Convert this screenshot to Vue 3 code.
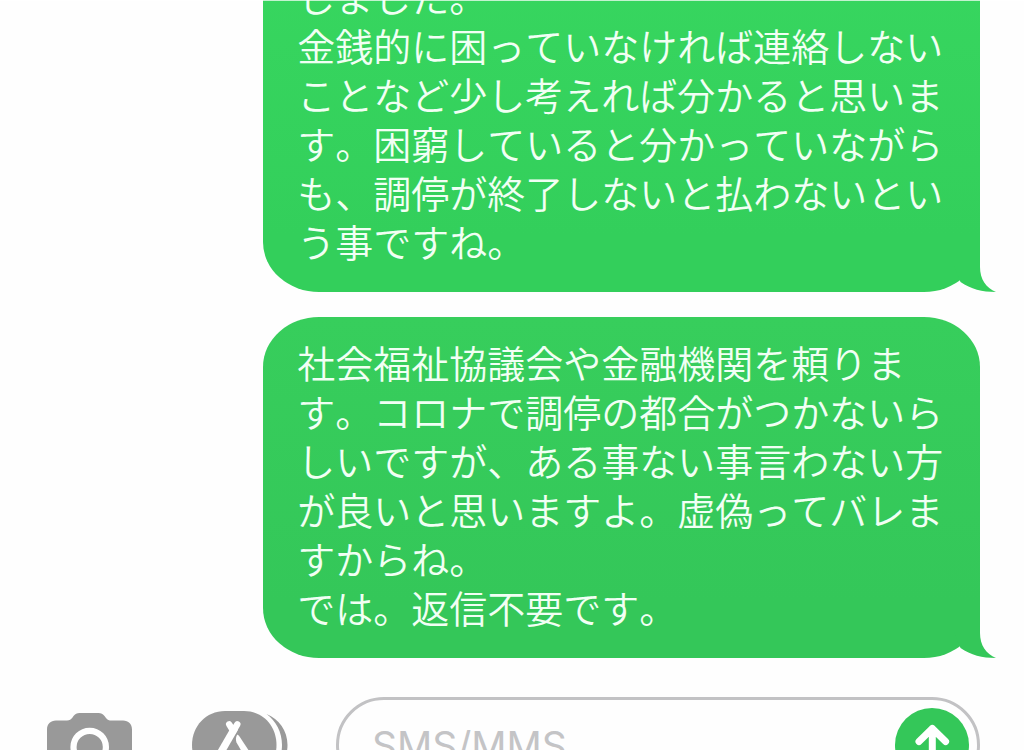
<script setup>
import { ref } from 'vue'

const draft = ref('')

const messages = [
  {
    id: 'first',
    continued: true,
    lines: [
      'しました。',
      '金銭的に困っていなければ連絡しない',
      'ことなど少し考えれば分かると思いま',
      'す。困窮していると分かっていながら',
      'も、調停が終了しないと払わないとい',
      'う事ですね。',
    ],
  },
  {
    id: 'second',
    continued: false,
    lines: [
      '社会福祉協議会や金融機関を頼りま',
      'す。コロナで調停の都合がつかないら',
      'しいですが、ある事ない事言わない方',
      'が良いと思いますよ。虚偽ってバレま',
      'すからね。',
      'では。返信不要です。',
    ],
  },
]
</script>

<template>
  <main class="page">
    <section class="thread" aria-label="メッセージ">
      <article
        v-for="message in messages"
        :key="message.id"
        class="bubble"
        :class="[message.id, { continued: message.continued }]"
      >
        <p class="text">{{ message.lines.join('\n') }}</p>
        <svg class="tail" viewBox="0 0 56 56" aria-hidden="true">
          <path
            d="M14 4H40V31C40 43 46 52 56 56C42 56 31 53 20.500 46L14 30Z"
            fill="currentColor"
          />
        </svg>
      </article>
    </section>

    <form class="composer" @submit.prevent>
      <button class="tool camera" type="button" aria-label="カメラ">
        <svg viewBox="0 0 85 64" aria-hidden="true">
          <path
            d="M9 7.500H20C22.500 7.500 24 6.500 25.500 4.500L26.500 3C28 1 30 0 32.500 0H51.500C54 0 56 1 57.500 3L59 5C60.500 7 62 7.500 64.500 7.500H76C81.500 7.500 85 11 85 16.500V55C85 60.500 81.500 64 76 64H9C3.500 64 0 60.500 0 55V16.500C0 11 3.500 7.500 9 7.500Z"
            fill="#999"
          />
          <circle cx="42.700" cy="34" r="16.200" fill="none" stroke="#fff" stroke-width="6.200" />
        </svg>
      </button>
      <button class="tool apps" type="button" aria-label="App">
        <svg viewBox="0 0 96 68" aria-hidden="true">
          <path
            d="M33 0H52C71 0 84.500 15 84.500 34S71 68 52 68H33C14 68 0 53 0 34S14 0 33 0Z"
            fill="#999"
          />
          <path
            d="M74.500 3C87 8 95.500 19.500 95.500 34S87 60 74.500 65C84 58 90 47 90 34S84 10 74.500 3Z"
            fill="#999"
          />
          <g fill="none" stroke="#fff" stroke-linecap="round">
            <path d="M37.200 13.300L41 19.500" stroke-width="6.400" />
            <path d="M45.300 13.300L41 20.500" stroke-width="6.400" />
            <path d="M42 18.500L25 48" stroke-width="7.400" />
          </g>
          <path
            d="M45 24C43.700 26 43.600 29 44.500 31.500L57 53L63 49L47.500 25.500C46.500 24 45.500 23.500 45 24Z"
            fill="#fff"
          />
        </svg>
      </button>
      <div class="field">
        <input v-model="draft" type="text" placeholder="SMS/MMS" aria-label="SMS/MMS" />
        <button class="send" type="submit" aria-label="送信">
          <svg viewBox="0 0 74 74" aria-hidden="true">
            <path
              d="M24 33.500L37.300 20.500L50.600 33.500M37.300 20.500V56"
              fill="none"
              stroke="#fff"
              stroke-width="7"
              stroke-linecap="round"
              stroke-linejoin="round"
            />
          </svg>
        </button>
      </div>
    </form>
  </main>
</template>

<style>
body {
  margin: 0;
  background: #fefefe;
}
</style>

<style scoped>
.page {
  position: relative;
  height: 100vh;
  overflow: hidden;
  background: #fefefe;
  font-family: Inter, 'Noto Sans CJK JP', sans-serif;
}

.page::before {
  content: '';
  position: absolute;
  z-index: 1;
  top: 0;
  left: 0;
  right: 0;
  height: 1px;
  background: rgba(255, 255, 255, 0.7);
}

.thread {
  display: flex;
  flex-direction: column;
  align-items: flex-end;
  gap: 25px;
  margin-top: -29px;
  padding-right: 44px;
}

.bubble {
  position: relative;
  box-sizing: border-box;
  width: 70vw;
  padding: 20px 30px 27px 34px;
  border-radius: 56px / 50px;
}

.bubble.first {
  color: #33cf5b;
  background: linear-gradient(#37d65f, #33cf5b calc(100% - 56px));
}

.bubble.second {
  color: #34c759;
  background: linear-gradient(#37ce5c, #34c759 calc(100% - 56px));
}

.bubble.continued {
  padding-top: 0;
  border-top-left-radius: 0;
  border-top-right-radius: 0;
}

.text {
  margin: 0;
  color: #f1fff4;
  font-family: 'Noto Sans CJK JP', sans-serif;
  font-size: 38px;
  font-weight: 350;
  font-kerning: none;
  text-spacing-trim: space-all;
  line-height: 49px;
  white-space: pre-wrap;
}

.tail {
  position: absolute;
  right: -16px;
  bottom: 0;
  width: 56px;
  height: 56px;
}

.composer {
  display: flex;
  align-items: center;
  margin-top: 39px;
  padding: 0 44px 24px 47px;
}

.tool {
  flex: none;
  padding: 0;
  border: 0;
  background: none;
}

.tool svg,
.send svg {
  display: block;
  width: 100%;
}

.camera {
  width: 85px;
  margin-right: 60px;
}

.apps {
  width: 96px;
  margin-right: 48px;
}

.field {
  display: flex;
  flex: 1;
  align-items: center;
  box-sizing: border-box;
  min-width: 0;
  height: 96px;
  padding-right: 8px;
  border: 3px solid #c2c2c4;
  border-radius: 48px;
}

.field input {
  flex: 1;
  min-width: 0;
  padding: 0 16px 0 33px;
  border: 0;
  outline: 0;
  background: none;
  color: #222;
  font-family: Inter, sans-serif;
  font-size: 39px;
  font-weight: 400;
}

.field input::placeholder {
  color: #c4c4c6;
  opacity: 1;
}

.send {
  flex: none;
  width: 74px;
  height: 74px;
  padding: 0;
  border: 0;
  border-radius: 50%;
  background: #34c759;
}
</style>
